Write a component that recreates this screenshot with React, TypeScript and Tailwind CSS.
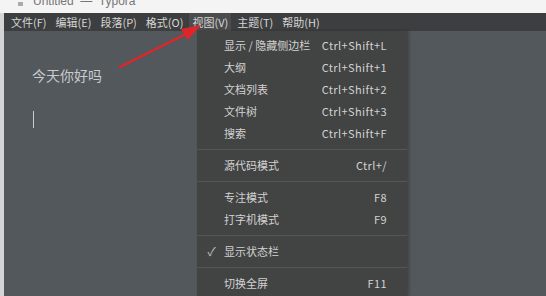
import React from "react";

const font = { fontFamily: '"Noto Sans CJK SC", "Noto Sans", sans-serif' };

const menus = ["文件(F)", "编辑(E)", "段落(P)", "格式(O)", "视图(V)", "主题(T)", "帮助(H)"];

type Item = { label: string; key?: string; checked?: boolean } | "sep";

const items: Item[] = [
  { label: "显示 / 隐藏侧边栏", key: "Ctrl+Shift+L" },
  { label: "大纲", key: "Ctrl+Shift+1" },
  { label: "文档列表", key: "Ctrl+Shift+2" },
  { label: "文件树", key: "Ctrl+Shift+3" },
  { label: "搜索", key: "Ctrl+Shift+F" },
  "sep",
  { label: "源代码模式", key: "Ctrl+/" },
  "sep",
  { label: "专注模式", key: "F8" },
  { label: "打字机模式", key: "F9" },
  "sep",
  { label: "显示状态栏", checked: true },
  "sep",
  { label: "切换全屏", key: "F11" },
];

function ViewMenu() {
  return (
    <div className="absolute left-[193px] top-0 bottom-0 w-[210px] bg-[#424343] pt-[3px] shadow-[2px_0_3px_rgba(0,0,0,0.25)]">
      {items.map((it, i) =>
        it === "sep" ? (
          <div key={i} className="flex h-[10px] items-center">
            <div className="h-px w-full bg-[#555657]" />
          </div>
        ) : (
          <div key={i} className="flex h-[22px] items-center pr-[20px] text-[11px] text-[#d2d2d2]">
            <div className="flex w-[27px] justify-center pl-[2px] text-[12px] text-[#bdbdbd]">
              {it.checked ? "✓" : ""}
            </div>
            <div className="flex-1">{it.label}</div>
            <div className="tracking-[0.4px]">{it.key}</div>
          </div>
        )
      )}
    </div>
  );
}

export default function App() {
  return (
    <div className="relative flex h-[296px] w-[546px] flex-col overflow-hidden bg-[#53585c]" style={font}>
      <div className="flex h-[13px] items-start overflow-hidden bg-[#f4f4f4] text-[12px] leading-none text-[#777]">
        <div className="ml-[18px] mt-[2px] h-[4px] w-[5px] bg-[#aaa]" />
        <div className="ml-[10px] mt-[-5px]" style={{ fontFamily: '"Liberation Sans", sans-serif' }}>
          Untitled &nbsp;—&nbsp; Typora
        </div>
      </div>
      <div className="flex flex-1">
        <div className="w-[4px] bg-[#d3d5d6]" />
        <div className="flex flex-1 flex-col">
          <div className="flex h-[18px] items-center bg-[#3d3e3f] pl-[4px] text-[11px] text-[#d6d6d6]">
            {menus.map((m) => (
              <div
                key={m}
                className={
                  "mr-[3px] flex h-full items-center px-[3px] " + (m === "视图(V)" ? "bg-[#4b4c4d]" : "")
                }
              >
                {m}
              </div>
            ))}
          </div>
          <div className="relative flex-1">
            <div className="pl-[28px] pt-[34px] text-[14px] text-[#c9cbcc]">今天你好吗</div>
            <div className="ml-[29px] mt-[25px] h-[17px] w-px bg-[#c9cbcc]" />
            <ViewMenu />
          </div>
        </div>
      </div>
      <svg className="pointer-events-none absolute left-0 top-0" width="546" height="296">
        <line x1="120" y1="67" x2="188" y2="33" stroke="#e0252a" strokeWidth="2.5" strokeLinecap="round" />
        <polygon points="201,25 181,29 188,40" fill="#e0252a" />
      </svg>
    </div>
  );
}
